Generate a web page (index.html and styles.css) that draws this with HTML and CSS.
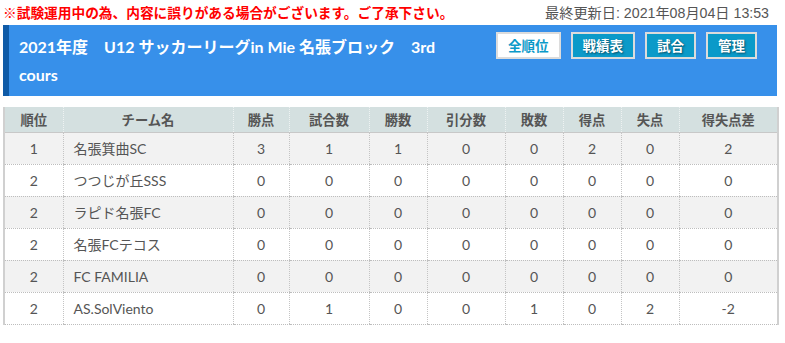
FILE: index.html
```html
<!DOCTYPE html>
<html lang="ja">
<head>
<meta charset="utf-8">
<link rel="stylesheet" href="styles.css">
</head>
<body>
<div class="page">
  <div class="topbar">
    <span class="notice">※試験運用中の為、内容に誤りがある場合がございます。ご了承下さい。</span>
    <span class="updated">最終更新日: 2021年08月04日 13:53</span>
  </div>
  <div class="banner">
    <h1 class="title">2021年度　U12 サッカーリーグin Mie 名張ブロック　3rd cours</h1>
    <div class="btns">
      <a class="btn btn-light">全順位</a>
      <a class="btn">戦績表</a>
      <a class="btn">試合</a>
      <a class="btn">管理</a>
    </div>
  </div>
  <table class="standings">
    <colgroup>
      <col class="c-rank"><col class="c-team"><col class="c-pts"><col class="c-gp"><col class="c-w">
      <col class="c-d"><col class="c-l"><col class="c-gf"><col class="c-ga"><col class="c-gd">
    </colgroup>
    <thead>
      <tr><th>順位</th><th>チーム名</th><th>勝点</th><th>試合数</th><th>勝数</th><th>引分数</th><th>敗数</th><th>得点</th><th>失点</th><th>得失点差</th></tr>
    </thead>
    <tbody>
      <tr><td>1</td><td class="team">名張箕曲SC</td><td>3</td><td>1</td><td>1</td><td>0</td><td>0</td><td>2</td><td>0</td><td>2</td></tr>
      <tr><td>2</td><td class="team">つつじが丘SSS</td><td>0</td><td>0</td><td>0</td><td>0</td><td>0</td><td>0</td><td>0</td><td>0</td></tr>
      <tr><td>2</td><td class="team">ラピド名張FC</td><td>0</td><td>0</td><td>0</td><td>0</td><td>0</td><td>0</td><td>0</td><td>0</td></tr>
      <tr><td>2</td><td class="team">名張FCテコス</td><td>0</td><td>0</td><td>0</td><td>0</td><td>0</td><td>0</td><td>0</td><td>0</td></tr>
      <tr><td>2</td><td class="team">FC FAMILIA</td><td>0</td><td>0</td><td>0</td><td>0</td><td>0</td><td>0</td><td>0</td><td>0</td></tr>
      <tr><td>2</td><td class="team">AS.SolViento</td><td>0</td><td>1</td><td>0</td><td>0</td><td>1</td><td>0</td><td>2</td><td>-2</td></tr>
    </tbody>
  </table>
</div>
</body>
</html>
```

FILE: styles.css
```css
* { box-sizing: border-box; }
html, body { margin: 0; padding: 0; background: #fff; }
body {
  font-family: Lato, "Noto Sans CJK JP", sans-serif;
  color: #555;
}
.page {
  width: 774px;
  margin-left: 3px;
}
.topbar {
  display: flex;
  justify-content: space-between;
  align-items: center;
  height: 25px;
  padding-bottom: 2px;
}
.notice {
  color: #f00;
  font-weight: bold;
  font-size: 13.7px;
  font-family: "Noto Sans CJK JP", sans-serif;
}
.updated {
  font-size: 14.2px;
  color: #555;
  margin-right: 8px;
  font-family: "Liberation Sans", "Noto Sans CJK JP", sans-serif;
}
.banner {
  display: flex;
  align-items: flex-start;
  background: #3790ea;
  border-left: 6px solid #0f5ba7;
  height: 71px;
  padding: 7px 20px 0 10px;
}
.title {
  flex: 1;
  margin: 1px 0 0;
  font-size: 16px;
  line-height: 28px;
  font-weight: bold;
  color: #fff;
  font-family: Lato, "Noto Sans CJK JP", sans-serif;
  padding-right: 40px;
}
.btns {
  display: flex;
  gap: 10px;
}
.btn {
  display: block;
  height: 27px;
  line-height: 23px;
  padding: 0 10px;
  border: 2px solid #dcdcdc;
  background: #0b9ac9;
  color: #fff;
  font-family: "Noto Sans CJK JP", sans-serif;
  font-weight: bold;
  font-size: 13.5px;
  text-shadow: 1px 1px 2px rgba(0,0,0,0.5);
  white-space: nowrap;
}
.btn-light {
  background: #fff;
  color: #0b9ac9;
  text-shadow: none;
}
.standings {
  margin-top: 11px;
  width: 774px;
  border-collapse: collapse;
  table-layout: fixed;
  font-size: 14px;
  border-left: 2px solid #d0d0d0;
  border-right: 2px solid #d0d0d0;
}
.c-rank { width: 59px; }
.c-team { width: 170px; }
.c-pts { width: 56px; }
.c-gp { width: 80px; }
.c-w { width: 58px; }
.c-d { width: 78px; }
.c-l { width: 58px; }
.c-gf { width: 58px; }
.c-ga { width: 58px; }
.c-gd { width: 99px; }
.standings th {
  height: 25px;
  background: #d4e0e0;
  color: #555;
  font-weight: bold;
  font-size: 13.3px;
  font-family: "Noto Sans CJK JP", sans-serif;
  border-left: 1px dotted #eef2f2;
  border-bottom: 1px solid #c8c8c8;
  padding: 0;
  text-align: center;
}
.standings td {
  height: 32px;
  padding: 0;
  text-align: center;
  border-left: 1px dotted #c4c4c4;
  border-bottom: 1px dotted #bdbdbd;
  color: #555;
}
.standings th:first-child, .standings td:first-child { border-left: 2px solid #d0d0d0; }
.standings td.team { text-align: left; padding-left: 10px; }
.standings tbody tr:nth-child(odd) td { background: #f2f2f2; }
.standings tbody tr:nth-child(even) td { background: #fff; }
```
